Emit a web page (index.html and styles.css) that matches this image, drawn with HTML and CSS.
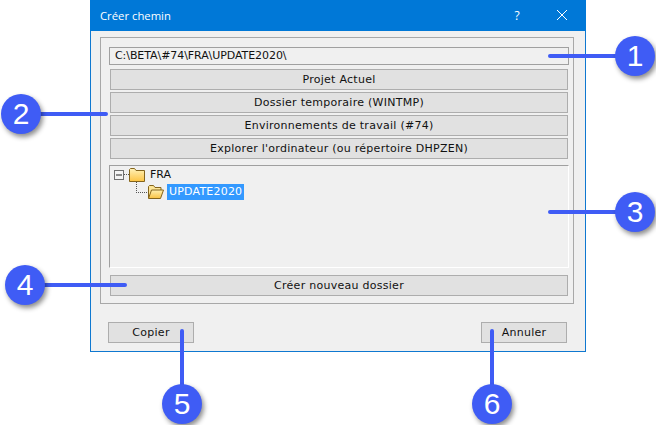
FILE: index.html
```html
<!DOCTYPE html>
<html lang="fr">
<head>
<meta charset="utf-8">
<title>Créer chemin</title>
<link rel="stylesheet" href="styles.css">
</head>
<body>
<div class="canvas">
  <div class="dialog">
    <header class="titlebar">
      <span class="title">Créer chemin</span>
      <span class="help">?</span>
      <svg class="close" width="12" height="12" viewBox="0 0 12 12"><path d="M1 1L11 11M11 1L1 11" stroke="#fff" stroke-width="1" fill="none"/></svg>
    </header>
    <div class="body">
      <section class="group">
        <div class="path">C:\BETA\#74\FRA\UPDATE2020\</div>
        <div class="stack">
          <button class="btn wide">Projet Actuel</button>
          <button class="btn wide">Dossier temporaire (WINTMP)</button>
          <button class="btn wide">Environnements de travail (#74)</button>
          <button class="btn wide">Explorer l'ordinateur (ou répertoire DHPZEN)</button>
        </div>
        <div class="tree">
          <div class="row row-root">
            <svg class="toggle" width="10" height="10" viewBox="0 0 10 10"><rect x=".5" y=".5" width="9" height="9" fill="#f4f4f4" stroke="#707070"/><path d="M2 5h6" stroke="#222"/></svg>
            <span class="dots-h"></span>
            <svg class="folder" width="16" height="14" viewBox="0 0 16 14"><defs><linearGradient id="f1" x1="0" y1="0" x2="0" y2="1"><stop offset="0" stop-color="#fff2b8"/><stop offset="1" stop-color="#fcc444"/></linearGradient></defs><path d="M.5 13.500V1.500l1-1h4l1.500 2h8.500v11z" fill="url(#f1)" stroke="#84641c"/></svg>
            <span class="label">FRA</span>
          </div>
          <div class="row row-child">
            <span class="elbow"></span>
            <svg class="folder" width="16" height="14" viewBox="0 0 16 14"><defs><linearGradient id="f2" x1="0" y1="0" x2="0" y2="1"><stop offset="0" stop-color="#fff0b0"/><stop offset="1" stop-color="#f9c242"/></linearGradient></defs><path d="M.5 13V1.500l1-1h4l1.500 2h6v2.500" fill="#fde596" stroke="#84641c"/><path d="M.5 13.500l3-8.500h12l-3 8.500z" fill="url(#f2)" stroke="#84641c"/></svg>
            <span class="label selected">UPDATE2020</span>
          </div>
        </div>
        <button class="btn wide">Créer nouveau dossier</button>
      </section>
      <footer class="actions">
        <button class="btn small">Copier</button>
        <button class="btn small">Annuler</button>
      </footer>
    </div>
  </div>

  <span class="lead lead-1"></span>
  <span class="lead lead-2"></span>
  <span class="lead lead-3"></span>
  <span class="lead lead-4"></span>
  <span class="lead lead-5"></span>
  <span class="lead lead-6"></span>
  <span class="badge badge-1">1</span>
  <span class="badge badge-2">2</span>
  <span class="badge badge-3">3</span>
  <span class="badge badge-4">4</span>
  <span class="badge badge-5">5</span>
  <span class="badge badge-6">6</span>
</div>
</body>
</html>
```
FILE: styles.css
```css
* { box-sizing: border-box; }
html, body { margin: 0; padding: 0; background: #fff; }
body { font-family: "DejaVu Sans", sans-serif; font-size: 11px; color: #111; }

.canvas { position: relative; width: 656px; height: 425px; overflow: hidden; padding-left: 90px; }

.dialog {
  width: 496px; height: 352px;
  background: #f0f0f0;
  border: 1px solid #0f78d0;
  border-top: 0;
  display: flex; flex-direction: column;
}

.titlebar {
  height: 31px; flex: none;
  margin: 0 -1px;
  background: #0078d7;
  color: #fff;
  display: flex; align-items: center;
  padding: 0 0 1px 10px;
  font-family: "Open Sans", sans-serif;
  font-size: 11.3px;
}
.title { flex: 1; }
.help { width: 14px; margin-right: 32px; text-align: center; font-size: 12px; }
.close { margin-right: 18px; }

.body { flex: 1; display: flex; flex-direction: column; padding: 6px 11px 0 9px; }

.group {
  height: 267px;
  border: 1px solid #a8a8a8;
  padding: 9px 4px 0 8px;
  display: flex; flex-direction: column;
}

.path {
  height: 18px;
  border: 1px solid #a0a0a0;
  padding-left: 5px;
  line-height: 16px;
  white-space: nowrap;
  letter-spacing: -0.07px;
}

.stack { display: flex; flex-direction: column; gap: 2px; margin-top: 4px; }

.btn {
  display: block;
  height: 21px;
  padding: 0;
  margin: 0;
  background: #e1e1e1;
  border: 1px solid #adadad;
  border-radius: 0;
  font: 11px "DejaVu Sans", sans-serif;
  letter-spacing: 0.27px;
  color: #111;
  text-align: center;
}
.wide { width: 458px; margin-left: 1px; flex: none; }
.small { width: 86px; }

.tree {
  height: 103px;
  margin-top: 6px;
  margin-bottom: 7px;
  width: 460px;
  border-top: 1px solid #a0a0a0;
  border-left: 1px solid #a0a0a0;
  border-right: 1px solid #fff;
  border-bottom: 1px solid #fff;
  padding: 1px 0 0 4px;
}
.row { display: flex; align-items: center; }
.row-root { height: 15px; }
.row-child { height: 16px; margin-top: 2px; padding-left: 23px; position: relative; }
.toggle { flex: none; }
.dots-h { width: 5px; border-top: 1px dotted #555; flex: none; }
.folder { flex: none; }
.label { line-height: 16px; }
.row-root .label { margin-left: 5px; }
.selected { background: #3399ff; color: #fff; margin-left: 3px; padding: 0 2px; letter-spacing: 0.2px; }
.elbow {
  position: absolute; left: 22px; top: -2px;
  width: 11px; height: 11px;
  border-left: 1px dotted #555;
  border-bottom: 1px dotted #555;
}
.row-child .folder { margin-left: 11px; }

.actions { display: flex; justify-content: space-between; margin-top: 18px; padding: 0 7px 0 8px; }

.lead { position: absolute; background: #3f5cf5; border-radius: 2px; }
.lead-1 { left: 548px; top: 54px; width: 75px; height: 4px; }
.lead-2 { left: 38px; top: 112px; width: 70px; height: 4px; }
.lead-3 { left: 548px; top: 210px; width: 75px; height: 4px; }
.lead-4 { left: 40px; top: 283px; width: 87px; height: 4px; }
.lead-5 { left: 180px; top: 329px; width: 4px; height: 60px; }
.lead-6 { left: 490px; top: 329px; width: 4px; height: 60px; }

.badge {
  position: absolute;
  width: 40px; height: 40px;
  border-radius: 50%;
  background: #3f5cf5;
  color: #fff;
  font: 30px/40px "Liberation Sans", sans-serif;
  text-align: center;
  box-shadow: 2px 3px 5px rgba(0,0,0,.45);
}
.badge-1 { left: 615px; top: 36px; }
.badge-2 { left: 1px; top: 94px; }
.badge-3 { left: 615px; top: 192px; }
.badge-4 { left: 5px; top: 265px; }
.badge-5 { left: 162px; top: 384px; }
.badge-6 { left: 472px; top: 384px; }
```
